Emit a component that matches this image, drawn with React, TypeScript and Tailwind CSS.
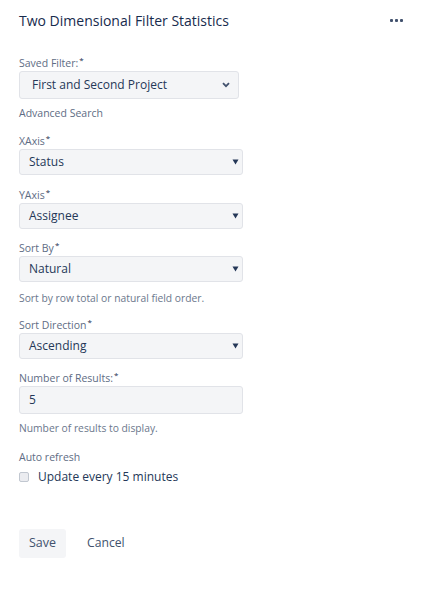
import React from "react";

const font = { fontFamily: '"Open Sans", "Noto Sans", sans-serif' };

function Label({ text }: { text: string }) {
  return (
    <div className="h-[14px] text-[10.5px] leading-[14px] text-[#5e6c84] mb-[1px]">
      {text}
      <span className="text-[8px] leading-[0] text-[#172b4d] ml-[1px] relative top-[-4px]">*</span>
    </div>
  );
}

function Triangle() {
  return (
    <svg width="7" height="6" viewBox="0 0 7 6" className="shrink-0">
      <path d="M0.5 0.5 L6.5 0.5 L3.5 5.5 Z" fill="#253858" />
    </svg>
  );
}

function TriSelect({ value }: { value: string }) {
  return (
    <div className="w-[224px] h-[26px] bg-[#f4f5f7] border border-[#e1e3e8] rounded-[3px] flex items-center justify-between pl-[9px] pr-[3px]">
      <span className="text-[12px] text-[#253858]">{value}</span>
      <Triangle />
    </div>
  );
}

export default function App() {
  return (
    <div className="w-[433px] h-[591px] bg-white" style={font}>
      <div className="h-[40px] flex items-center justify-between pl-[19px] pr-[30px]">
        <span className="text-[14px] font-medium text-[#172b4d] pt-[1px]">
          Two Dimensional Filter Statistics
        </span>
        <div className="flex gap-[2px] items-center">
          <span className="w-[3px] h-[3px] rounded-[1px] bg-[#42526e]" />
          <span className="w-[3px] h-[3px] rounded-[1px] bg-[#42526e]" />
          <span className="w-[3px] h-[3px] rounded-[1px] bg-[#42526e]" />
        </div>
      </div>

      <div className="px-[19px]">
        <div className="mt-[16px]">
          <Label text="Saved Filter:" />
          <div className="w-[220px] h-[28px] bg-[#f4f5f7] border border-[#e1e3e8] rounded-[3px] flex items-center justify-between pl-[12px] pr-[8px]">
            <span className="text-[12px] text-[#253858]">First and Second Project</span>
            <svg width="8" height="6" viewBox="0 0 8 6">
              <path d="M1 1.2 L4 4.2 L7 1.2" stroke="#42526e" strokeWidth="1.8" fill="none" />
            </svg>
          </div>
        </div>
        <div className="mt-[7px] text-[10.5px] leading-[14px] text-[#5e6c84]">Advanced Search</div>

        <div className="mt-[14px]">
          <Label text="XAxis" />
          <TriSelect value="Status" />
        </div>

        <div className="mt-[13px]">
          <Label text="YAxis" />
          <TriSelect value="Assignee" />
        </div>

        <div className="mt-[12px]">
          <Label text="Sort By" />
          <TriSelect value="Natural" />
        </div>
        <div className="mt-[9px] text-[10.3px] leading-[14px] text-[#6b778c]">
          Sort by row total or natural field order.
        </div>

        <div className="mt-[13px]">
          <Label text="Sort Direction" />
          <TriSelect value="Ascending" />
        </div>

        <div className="mt-[12px]">
          <Label text="Number of Results:" />
          <div className="w-[224px] h-[28px] bg-[#f4f5f7] border border-[#e1e3e8] rounded-[3px] flex items-center pl-[9px]">
            <span className="text-[12px] text-[#253858]">5</span>
          </div>
        </div>
        <div className="mt-[7px] text-[10.3px] leading-[14px] text-[#6b778c]">
          Number of results to display.
        </div>

        <div className="mt-[15px] text-[10.5px] leading-[14px] text-[#5e6c84]">Auto refresh</div>
        <div className="mt-[4px] h-[18px] flex items-center">
          <span className="w-[10px] h-[10px] rounded-[2px] border border-[#c1c7d0] bg-[#ebecf0]" />
          <span className="ml-[9px] text-[12px] text-[#253858]">Update every 15 minutes</span>
        </div>

        <div className="mt-[43px] flex items-center">
          <div className="w-[47px] h-[29px] bg-[#f4f5f7] rounded-[3px] flex items-center justify-center text-[12.5px] text-[#42526e]">
            Save
          </div>
          <div className="ml-[21px] text-[12.2px] text-[#42526e]">Cancel</div>
        </div>
      </div>
    </div>
  );
}
